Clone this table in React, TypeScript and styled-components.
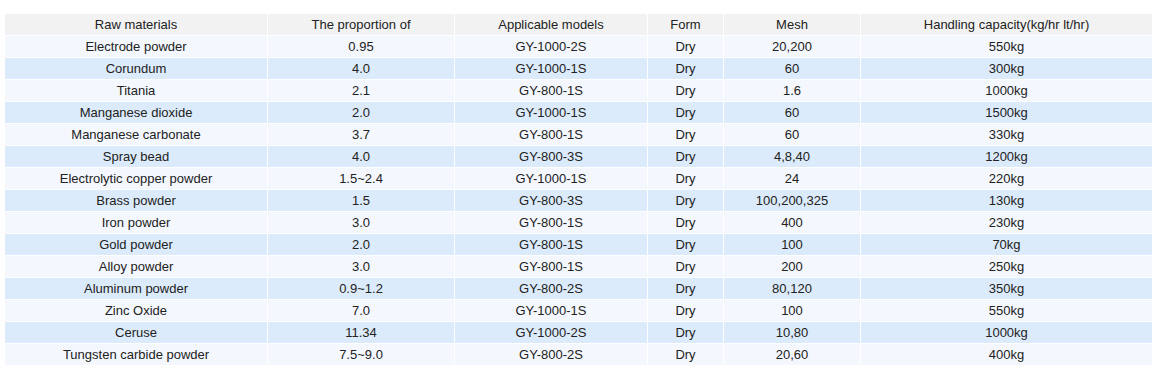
import React from 'react';
import styled, { createGlobalStyle } from 'styled-components';

const GlobalStyle = createGlobalStyle`
  body {
    margin: 0;
    background: #fff;
    font-family: "Liberation Sans", Arial, sans-serif;
  }
`

const Wrapper = styled.div`
  padding: 13px 0 0 4px;
`

const Table = styled.table`
  border-collapse: separate;
  border-spacing: 1px;
  table-layout: fixed;
  width: 1149px;
  font-size: 13px;
  color: #222;
`

const HeadCell = styled.th`
  height: 21px;
  padding: 0;
  font-weight: normal;
  text-align: center;
  background-color: #f2f2f2;
`

const Row = styled.tr<{ striped: boolean }>`
  background-color: ${props => props.striped ? '#dcebfb' : '#f4f8fe'};
`

const Cell = styled.td`
  height: 21px;
  padding: 0;
  text-align: center;
  white-space: nowrap;
`

const columns = [
  { title: 'Raw materials', width: 262 },
  { title: 'The proportion of', width: 186 },
  { title: 'Applicable models', width: 192 },
  { title: 'Form', width: 75 },
  { title: 'Mesh', width: 136 },
  { title: 'Handling capacity(kg/hr lt/hr)', width: 291 },
]

const rows = [
  ['Electrode powder', '0.95', 'GY-1000-2S', 'Dry', '20,200', '550kg'],
  ['Corundum', '4.0', 'GY-1000-1S', 'Dry', '60', '300kg'],
  ['Titania', '2.1', 'GY-800-1S', 'Dry', '1.6', '1000kg'],
  ['Manganese dioxide', '2.0', 'GY-1000-1S', 'Dry', '60', '1500kg'],
  ['Manganese carbonate', '3.7', 'GY-800-1S', 'Dry', '60', '330kg'],
  ['Spray bead', '4.0', 'GY-800-3S', 'Dry', '4,8,40', '1200kg'],
  ['Electrolytic copper powder', '1.5~2.4', 'GY-1000-1S', 'Dry', '24', '220kg'],
  ['Brass powder', '1.5', 'GY-800-3S', 'Dry', '100,200,325', '130kg'],
  ['Iron powder', '3.0', 'GY-800-1S', 'Dry', '400', '230kg'],
  ['Gold powder', '2.0', 'GY-800-1S', 'Dry', '100', '70kg'],
  ['Alloy powder', '3.0', 'GY-800-1S', 'Dry', '200', '250kg'],
  ['Aluminum powder', '0.9~1.2', 'GY-800-2S', 'Dry', '80,120', '350kg'],
  ['Zinc Oxide', '7.0', 'GY-1000-1S', 'Dry', '100', '550kg'],
  ['Ceruse', '11.34', 'GY-1000-2S', 'Dry', '10,80', '1000kg'],
  ['Tungsten carbide powder', '7.5~9.0', 'GY-800-2S', 'Dry', '20,60', '400kg'],
]

export default function App() {
  return (
    <Wrapper>
      <GlobalStyle />
      <Table>
        <colgroup>
          {columns.map(col => <col key={col.title} style={{ width: col.width }} />)}
        </colgroup>
        <thead>
          <tr>
            {columns.map(col => <HeadCell key={col.title}>{col.title}</HeadCell>)}
          </tr>
        </thead>
        <tbody>
          {rows.map((row, i) => (
            <Row key={row[0]} striped={i % 2 === 1}>
              {row.map((value, j) => <Cell key={j}>{value}</Cell>)}
            </Row>
          ))}
        </tbody>
      </Table>
    </Wrapper>
  )
}
